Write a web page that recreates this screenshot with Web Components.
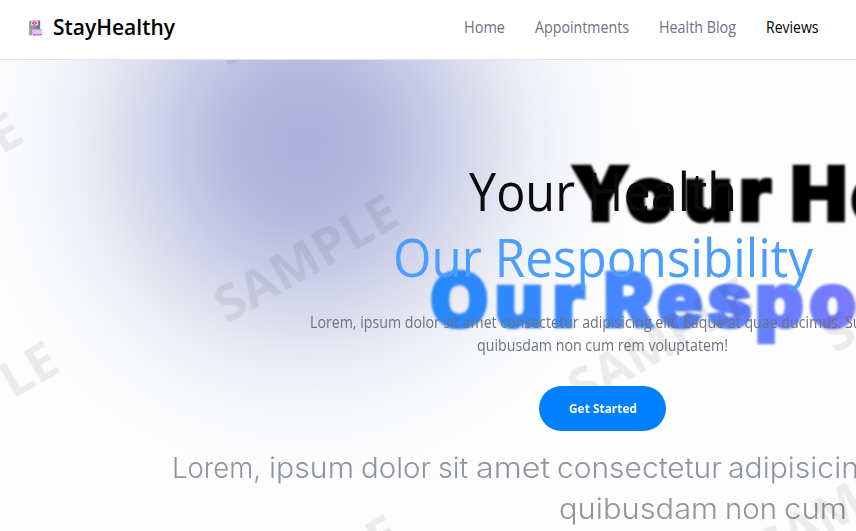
<!DOCTYPE html>
<html lang="en">
<head>
<meta charset="utf-8">
<title>StayHealthy</title>
<style>
html,body{margin:0;height:100%;overflow:hidden;background:#fff}
body{font-family:"Open Sans","Noto Sans",sans-serif}
</style>
</head>
<body>
<health-app></health-app>
<script>
function define(name, html) {
  customElements.define(name, class extends HTMLElement {
    connectedCallback() {
      if (this.shadowRoot) return;
      const root = this.attachShadow({mode: 'open'});
      const t = document.createElement('template');
      t.innerHTML = html(this);
      root.append(t.content.cloneNode(true));
    }
  });
}

// One line of text set to an exact advance width.
define('fit-line', el => {
  const w = +el.getAttribute('w'), h = +el.getAttribute('h'), b = el.getAttribute('base');
  return `<style>:host{display:block;flex:none;width:${w}px;height:${h}px}
  svg{display:block;overflow:visible}text{fill:currentColor}</style>
  <svg width="${w}" height="${h}"><text x="0" y="${b}" textLength="${w}" lengthAdjust="spacingAndGlyphs">${el.getAttribute('text')}</text></svg>`;
});

define('brand-logo', () => `<style>
  :host{display:flex;align-items:center;gap:10px;color:#000;font-size:22px;font-weight:550}
  svg{display:block}</style>
  <svg width="14" height="16" viewBox="0 0 14 16">
    <defs><linearGradient id="g"><stop offset="0" stop-color="#aaa2b3"/><stop offset="1" stop-color="#776d80"/></linearGradient></defs>
    <path d="M0 1.6L1.2.6h10v14.6H0z" fill="url(#g)"/>
    <path d="M2.2.6h6.6v4.8H2.2z" fill="#f4d9e8"/>
    <path d="M3 2h1.4V1h2v1H8v2H6.6v1H4.2V4H3z" fill="#f0509f"/>
    <path d="M5 2.4h1v1.2H5z" fill="#f9d6e8"/>
    <path d="M3.2 9.4h10v5.8h-10z" fill="#dcc5f8"/>
    <path d="M3.2 9.4h10v.7h-10z" fill="#bd9bdd"/>
    <path d="M4.2 14h3v1.2h-3zM8 14h1.6v1.2H8zM10.3 14h2.4v1.2h-2.4z" fill="#e63fd0"/>
  </svg>
  <fit-line w="122" h="30" base="22" text="StayHealthy"></fit-line>`);

define('nav-link', el => `<style>
  :host{display:block;font-size:15.5px;color:#6c727f}
  :host([active]){color:#000}</style>
  <fit-line w="${el.getAttribute('w')}" h="24" base="17" text="${el.getAttribute('label')}"></fit-line>`);

define('site-header', () => `<style>
  :host{display:flex;justify-content:space-between;box-sizing:border-box;height:60px;padding:12.5px 37.5px 0 29px;background:#fff;border-bottom:1px solid #dfe1e5}
  nav{display:flex;gap:30px;padding-top:3.5px}
  brand-logo{height:30px}</style>
  <brand-logo></brand-logo>
  <nav><nav-link w="41" label="Home"></nav-link><nav-link w="94" label="Appointments"></nav-link><nav-link w="77" label="Health Blog"></nav-link><nav-link active w="52.5" label="Reviews"></nav-link></nav>`);

define('hero-art', () => {
  const stamps = [[231,322],[-145,239.5],[-109,469.5],[232,643],[231,65],[585,405],[839,352],[774,565]]
    .map(([x,y]) => `<text transform="translate(${x-4} ${y-57.5}) rotate(-30)" textLength="203" lengthAdjust="spacingAndGlyphs">SAMPLE</text>`).join('');
  const words = [['Lorem,',172,89],['ipsum',269,85],['dolor',361,70],['sit',438,30],['amet',476,74],['consectetur',557,165],['adipisicing',728,149]]
    .map(([s,x,w]) => `<text x="${x}" y="417.6" textLength="${w}" lengthAdjust="spacingAndGlyphs">${s}</text>`).join('')
    + [['quibusdam',559,159],['non',725,52],['cum',784,63]]
    .map(([s,x,w]) => `<text x="${x}" y="459" textLength="${w}" lengthAdjust="spacingAndGlyphs">${s}</text>`).join('');
  return `<style>
  :host{display:block;overflow:hidden}
  svg{display:block}
  .big{font:900 75.5px Inter,sans-serif;filter:blur(.8px);stroke:#000;stroke-width:2.6px}
  .big g{stroke:url(#ink)}
  .light{font:300 28px Inter,sans-serif;fill:#8f959e;filter:blur(.5px)}
  .mark{font:700 50.5px "Open Sans",sans-serif;fill:#000;fill-opacity:.07;filter:blur(.5px)}
  </style>
  <svg width="856" height="471" viewBox="0 0 856 471">
    <defs>
      <radialGradient id="glow" gradientUnits="userSpaceOnUse" cx="305" cy="83" r="338">
        <stop offset="0" stop-color="#acb1da"/><stop offset=".12" stop-color="#afb4dc"/><stop offset=".25" stop-color="#b9bce0"/>
        <stop offset=".38" stop-color="#c8cbe7"/><stop offset=".5" stop-color="#d8daec"/><stop offset=".62" stop-color="#e7e8f4"/>
        <stop offset=".75" stop-color="#f3f4f9"/><stop offset=".88" stop-color="#fafbfd"/><stop offset="1" stop-color="#fdfdfd"/>
      </radialGradient>
      <linearGradient id="ink" gradientUnits="userSpaceOnUse" x1="432" y1="0" x2="856" y2="0">
        <stop offset="0" stop-color="#2489fb"/><stop offset=".45" stop-color="#4686ff"/><stop offset="1" stop-color="#7b7bfc"/>
      </linearGradient>
    </defs>
    <rect width="856" height="471" fill="url(#glow)"/>
    <g class="big">
      <text x="571 626 683.5 739" y="161.4">Your</text>
      <text x="790.5 850.5" y="161.4">He</text>
      <g fill="url(#ink)"><text x="430 494.5 552.5" y="267">Our</text>
      <text x="603.5 657 707.5 755 809" y="267">Respo</text></g>
    </g>
    <g class="light">${words}</g>
    <g class="mark">${stamps}</g>
  </svg>`;
});

define('pill-button', () => `<style>
  :host{display:flex;justify-content:center;align-items:center;width:127px;height:45px;border-radius:23px;background:#0080ff;color:#fff;font-size:13px;font-weight:700}
  </style><fit-line w="68" h="18" base="13" text="Get Started"></fit-line>`);

define('hero-copy', () => `<style>
  :host{display:flex;flex-direction:column;align-items:center;width:586px;padding:100px 0 0 309.5px}
  h1,p{margin:0;display:flex;flex-direction:column;align-items:center}
  h1{font-size:52.5px;font-weight:400;color:#0b0c0e}
  .b{color:#4b9eff}
  p{font-size:15.5px;color:#6c727f;padding:18px 0 30px}
  </style>
  <h1><fit-line w="268" h="66" base="51" text="Your Health"></fit-line><fit-line class="b" w="420" h="66" base="51" text="Our Responsibility"></fit-line></h1>
  <p><fit-line w="586" h="23" base="18" text="Lorem, ipsum dolor sit amet consectetur adipisicing elit. Eaque at quae ducimus. Suscipit"></fit-line><fit-line w="251" h="23" base="18" text="quibusdam non cum rem voluptatem!"></fit-line></p>
  <pill-button></pill-button>`);

define('hero-section', () => `<style>
  :host{display:grid;height:471px;overflow:hidden}
  ::slotted(*){grid-area:1/1}
  </style><slot></slot>`);

define('health-app', () => `<style>:host{display:block;width:856px;height:531px;overflow:hidden}</style>
  <site-header></site-header>
  <hero-section><hero-art></hero-art><hero-copy></hero-copy></hero-section>`);
</script>
</body>
</html>
